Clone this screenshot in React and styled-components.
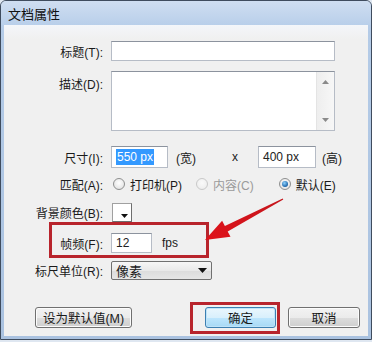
import React from "react";
import styled, { createGlobalStyle } from "styled-components";

const GlobalStyle = createGlobalStyle`
  html, body {
    margin: 0;
    padding: 0;
    background: #dfe7f1;
  }
  body {
    font-family: "Liberation Sans", "Noto Sans CJK SC", sans-serif;
    font-size: 12px;
    color: #1a1a1a;
  }
`;

const Page = styled.div`
  position: relative;
  width: 372px;
  height: 342px;
  overflow: hidden;
`;

const Window = styled.div`
  box-sizing: border-box;
  width: 372px;
  height: 340px;
  border: 1px solid #3f4c5e;
  border-radius: 6px 6px 0 0;
  background: linear-gradient(#c3d6ee, #b4cbe7 30px, #aac2e0);
  display: flex;
  flex-direction: column;
`;

const TitleBar = styled.div`
  height: 24px;
  display: flex;
  align-items: center;
  padding-left: 7px;
  font-size: 13px;
  color: #111;
  background: linear-gradient(#cfdef1, #b9cfea);
  border-radius: 5px 5px 0 0;
`;

const Body = styled.div`
  flex: 1;
  margin: 0 3px 3px 3px;
  background: linear-gradient(#f4f6fa, #f0f0f0 14px);
  display: flex;
  flex-direction: column;
  padding: 0 8px 8px 0;
`;

const Row = styled.div`
  display: flex;
  align-items: ${(p) => (p.$top ? "flex-start" : "center")};
  margin-top: ${(p) => p.$mt}px;
  height: ${(p) => p.$h}px;
`;

const Label = styled.div`
  width: 99px;
  margin-right: 8px;
  text-align: right;
  white-space: nowrap;
  padding-top: ${(p) => (p.$top ? 4 : 0)}px;
`;

const Input = styled.div`
  box-sizing: border-box;
  width: ${(p) => p.$w}px;
  height: ${(p) => p.$h}px;
  margin-left: ${(p) => p.$ml || 0}px;
  background: #fff;
  border: 1px solid #b6bcc6;
  border-top-color: #8c939e;
  padding-left: 4px;
  display: flex;
  align-items: center;
  font-size: 12px;
  color: #222;
`;

const Selected = styled.span`
  background: #3399ff;
  color: #fff;
  padding: 1px 1px;
`;

const TextArea = styled.div`
  box-sizing: border-box;
  width: 224px;
  height: 60px;
  background: #fff;
  border: 1px solid #b6bcc6;
  border-top-color: #8c939e;
  display: flex;
  justify-content: flex-end;
`;

const ScrollBar = styled.div`
  width: 17px;
  background: linear-gradient(90deg, #eeeeee, #f7f7f7);
  border-left: 1px solid #e4e4e4;
  display: flex;
  flex-direction: column;
  justify-content: space-between;
  align-items: center;
  padding: 8px 0 8px;
`;

const Text = styled.span`
  margin-left: ${(p) => p.$ml || 0}px;
  color: ${(p) => (p.$disabled ? "#9a9a9a" : "inherit")};
  white-space: nowrap;
`;

const Radio = styled.span`
  box-sizing: border-box;
  width: 12px;
  height: 12px;
  border-radius: 50%;
  margin-left: ${(p) => p.$ml || 0}px;
  margin-right: 5px;
  border: 1px solid ${(p) => (p.$disabled ? "#c9c9c9" : "#8e8f8f")};
  background: ${(p) =>
    p.$disabled
      ? "radial-gradient(circle at 50% 40%, #fafafa, #eaeaea)"
      : "radial-gradient(circle at 50% 40%, #ffffff, #dcdcdc)"};
  display: flex;
  align-items: center;
  justify-content: center;
  &::after {
    content: "";
    display: ${(p) => (p.$checked ? "block" : "none")};
    width: 6px;
    height: 6px;
    border-radius: 50%;
    background: radial-gradient(circle at 40% 35%, #8fd3ff, #1b64a8 70%, #0d3b6e);
  }
`;

const Swatch = styled.div`
  box-sizing: border-box;
  width: 20px;
  height: 19px;
  margin-left: 1px;
  background: #fff;
  border: 1px solid #a0a0a0;
  border-right-color: #6e6e6e;
  border-bottom-color: #6e6e6e;
  display: flex;
  align-items: flex-end;
  justify-content: flex-end;
  padding: 0 3px 3px 0;
`;

const Select = styled.div`
  box-sizing: border-box;
  width: 101px;
  height: 19px;
  border: 1px solid #707070;
  border-radius: 2px;
  background: linear-gradient(#f6f6f6, #e9e9e9 50%, #dcdcdc 51%, #e6e6e6);
  display: flex;
  align-items: center;
  justify-content: space-between;
  padding: 0 4px 0 4px;
  font-size: 13px;
`;

const ButtonRow = styled.div`
  margin-top: auto;
  display: flex;
  align-items: center;
  padding-left: 31px;
`;

const Button = styled.div`
  box-sizing: border-box;
  width: ${(p) => p.$w}px;
  height: 21px;
  margin-left: ${(p) => p.$ml || 0}px;
  border: 1px solid ${(p) => (p.$focus ? "#3c7fb1" : "#707070")};
  border-radius: 3px;
  background: ${(p) =>
    p.$focus
      ? "linear-gradient(#eaf6fd, #d9f0fc 50%, #bee6fd 51%, #a7d9f5)"
      : "linear-gradient(#f2f2f2, #ebebeb 50%, #dddddd 51%, #cfcfcf)"};
  box-shadow: inset 0 0 0 1px ${(p) => (p.$focus ? "#bfe3f8" : "#fcfcfc")};
  display: flex;
  align-items: center;
  justify-content: center;
  font-size: 12.5px;
`;

const RedBox = styled.div`
  position: absolute;
  box-sizing: border-box;
  left: ${(p) => p.$x}px;
  top: ${(p) => p.$y}px;
  width: ${(p) => p.$w}px;
  height: ${(p) => p.$h}px;
  border: 3px solid #b8242c;
  pointer-events: none;
`;

const Overlay = styled.svg`
  position: absolute;
  left: 0;
  top: 0;
  pointer-events: none;
`;

const Tri = ({ up, color = "#666", w = 7, h = 4 }) => (
  <svg width={w} height={h} viewBox={`0 0 ${w} ${h}`}>
    <polygon
      points={up ? `0,${h} ${w},${h} ${w / 2},0` : `0,0 ${w},0 ${w / 2},${h}`}
      fill={color}
    />
  </svg>
);

export default function App() {
  return (
    <Page>
      <GlobalStyle />
      <Window>
        <TitleBar>文档属性</TitleBar>
        <Body>
          <Row $mt={16} $h={20}>
            <Label>标题(T):</Label>
            <Input $w={224} $h={20} />
          </Row>
          <Row $mt={10} $h={60} $top>
            <Label $top>描述(D):</Label>
            <TextArea>
              <ScrollBar>
                <Tri up color="#8a8a8a" />
                <Tri color="#8a8a8a" />
              </ScrollBar>
            </TextArea>
          </Row>
          <Row $mt={15} $h={22}>
            <Label>尺寸(I):</Label>
            <Input $w={57} $h={22}>
              <Selected>550 px</Selected>
            </Input>
            <Text $ml={8}>(宽)</Text>
            <Text $ml={36}>x</Text>
            <Input $w={58} $h={22} $ml={20}>
              400 px
            </Input>
            <Text $ml={6}>(高)</Text>
          </Row>
          <Row $mt={8} $h={16}>
            <Label>匹配(A):</Label>
            <Radio $ml={2} />
            <Text>打印机(P)</Text>
            <Radio $ml={14} $disabled />
            <Text $disabled>内容(C)</Text>
            <Radio $ml={25} $checked />
            <Text>默认(E)</Text>
          </Row>
          <Row $mt={11} $h={19}>
            <Label>背景颜色(B):</Label>
            <Swatch>
              <Tri color="#111" />
            </Swatch>
          </Row>
          <Row $mt={11} $h={20}>
            <Label>帧频(F):</Label>
            <Input $w={41} $h={20}>
              12
            </Input>
            <Text $ml={10}>fps</Text>
          </Row>
          <Row $mt={8} $h={19}>
            <Label>标尺单位(R):</Label>
            <Select>
              <span>像素</span>
              <Tri color="#111" w={9} h={5} />
            </Select>
          </Row>
          <ButtonRow>
            <Button $w={97}>设为默认值(M)</Button>
            <Button $w={71} $ml={73} $focus>
              确定
            </Button>
            <Button $w={72} $ml={12}>
              取消
            </Button>
          </ButtonRow>
        </Body>
      </Window>
      <RedBox $x={49} $y={222} $w={160} $h={36} />
      <RedBox $x={190} $y={302} $w={90} $h={32} />
      <Overlay width="372" height="342">
        <defs>
          <linearGradient id="arrowFill" x1="0" y1="1" x2="1" y2="0">
            <stop offset="0" stopColor="#e0121b" />
            <stop offset="1" stopColor="#c4161c" />
          </linearGradient>
        </defs>
        <polygon
          points="205,240 222.1,220.8 224.9,226.1 282.7,198.4 283.3,199.6 227.7,231.5 230.5,236.8"
          fill="url(#arrowFill)"
        />
      </Overlay>
    </Page>
  );
}
